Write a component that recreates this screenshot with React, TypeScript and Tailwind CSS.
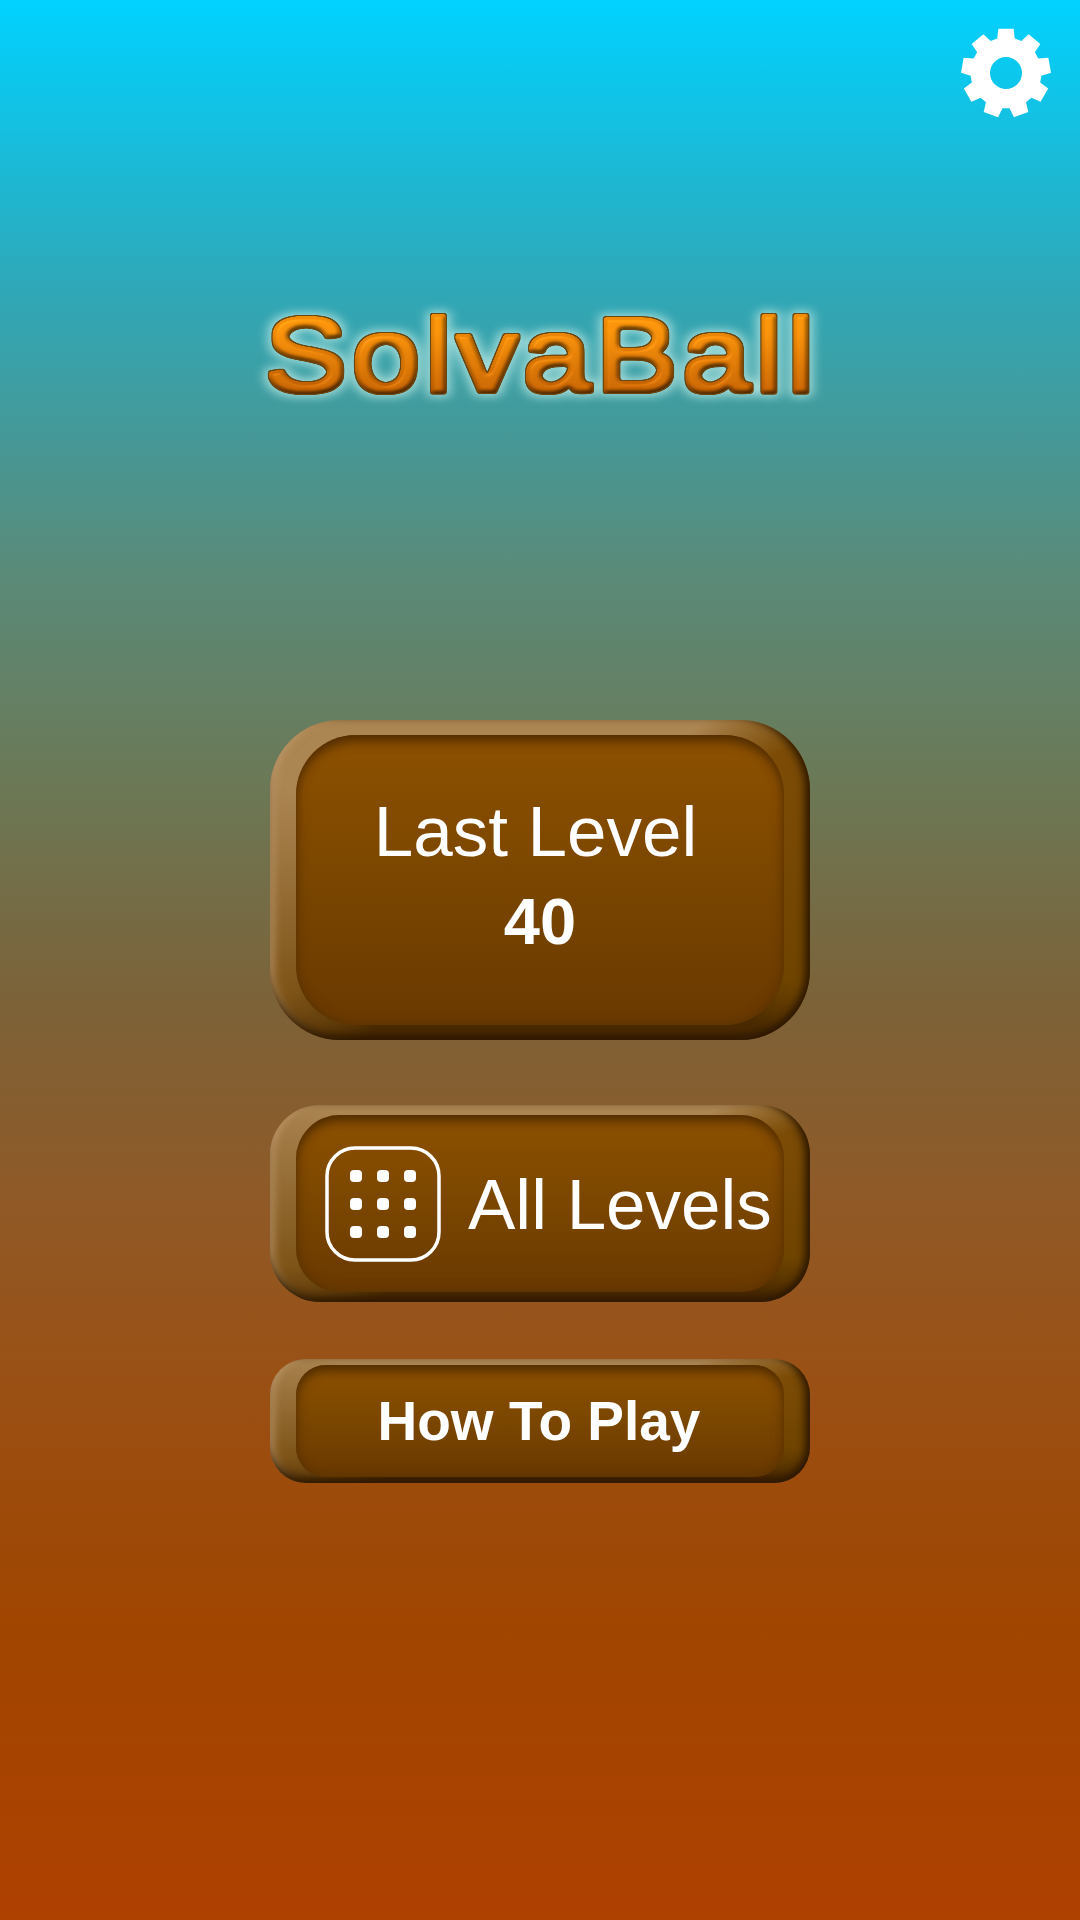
import React from 'react';

// gear outline, built from tooth count so the teeth stay even
const gearPath = (() => {
  const cx = 46, cy = 46, teeth = 9, outer = 45, body = 35.5;
  const step = (Math.PI * 2) / teeth;
  const pts: string[] = [];
  for (let i = 0; i < teeth; i++) {
    const a = -Math.PI / 2 + i * step;
    const at = (r: number, off: number) => {
      const x = cx + r * Math.cos(a + off);
      const y = cy + r * Math.sin(a + off);
      return `${x.toFixed(2)} ${y.toFixed(2)}`;
    };
    pts.push(at(body, -0.25), at(outer, -0.17), at(outer, 0.17), at(body, 0.25));
  }
  return `M${pts.join('L')}Z M${cx - 16} ${cy}a16 16 0 1 0 32 0a16 16 0 1 0 -32 0Z`;
})();

const GearIcon = () => (
  <svg width="92" height="92" viewBox="0 0 92 92" className="text-white">
    <path d={gearPath} fill="currentColor" fillRule="evenodd" />
  </svg>
);

const GridIcon = () => {
  const xs = [31, 58, 85];
  const ys = [30, 58, 86];
  return (
    <svg width="116" height="116" viewBox="0 0 116 116" className="shrink-0">
      <rect x="2" y="2" width="112" height="112" rx="28" fill="none" stroke="#fff" strokeWidth="3.5" />
      {ys.map((y) =>
        xs.map((x) => <rect key={`${x}-${y}`} x={x - 6} y={y - 6} width="12" height="12" rx="4" fill="#fff" />)
      )}
    </svg>
  );
};

interface ChunkyButtonProps {
  outerClass: string;
  innerClass: string;
  children: React.ReactNode;
}

const ChunkyButton = ({ outerClass, innerClass, children }: ChunkyButtonProps) => (
  <button
    className={`flex w-[540px] flex-col shadow-[inset_-9px_0_9px_-4px_#2e1900,inset_0_-9px_9px_-4px_#2e1900,inset_9px_0_10px_-6px_#c09a6c] ${outerClass}`}
  >
    <span
      className={`flex flex-1 mx-[26px] bg-[linear-gradient(180deg,#8a4f00_8%,#7a4600_50%,#6c3b00_92%)] shadow-[inset_0_9px_12px_-4px_#4f2c00,inset_0_0_12px_#653900,inset_0_-6px_10px_-4px_#5a3200] ${innerClass}`}
    >
      {children}
    </span>
  </button>
);

export default function App() {
  return (
    <div
      className="flex min-h-[1920px] w-full flex-col items-center overflow-hidden bg-[linear-gradient(180deg,#00d2ff_0%,#2fa8b8_15%,#5a8a78_30%,#6a7a58_40%,#7c6238_52%,#8f5a28_62%,#9a5014_72%,#a04500_85%,#ae4000_100%)] text-white"
      style={{ fontFamily: '"Liberation Sans", Arial, sans-serif' }}
    >
      {/* hidden filter for the embossed logo */}
      <svg className="absolute h-0 w-0" aria-hidden="true">
        <defs>
          <filter id="logoBevel" x="-10%" y="-30%" width="120%" height="160%" colorInterpolationFilters="sRGB">
            {/* fatten and round the glyphs */}
            <feMorphology in="SourceAlpha" operator="dilate" radius="1.8" result="fat0" />
            <feGaussianBlur in="fat0" stdDeviation="1.4" result="fatBlur" />
            <feComponentTransfer in="fatBlur" result="round">
              <feFuncA type="linear" slope="6" intercept="-2.2" />
            </feComponentTransfer>
            <feMorphology in="SourceGraphic" operator="dilate" radius="5" result="colorFat" />
            <feComposite in="colorFat" in2="round" operator="in" result="body" />
            {/* emboss */}
            <feGaussianBlur in="round" stdDeviation="2.2" result="soft" />
            <feDiffuseLighting in="soft" surfaceScale="3.5" diffuseConstant="1.2" lightingColor="#ffffff" result="dif">
              <feDistantLight azimuth="245" elevation="60" />
            </feDiffuseLighting>
            <feComposite in="body" in2="dif" operator="arithmetic" k1="0.72" k2="0.3" k3="0" k4="0" result="shaded" />
            <feComposite in="shaded" in2="round" operator="in" result="shadedIn" />
            <feSpecularLighting in="soft" surfaceScale="4" specularConstant="0.3" specularExponent="24" lightingColor="#ffc060" result="spec">
              <feDistantLight azimuth="245" elevation="52" />
            </feSpecularLighting>
            <feComposite in="spec" in2="round" operator="in" result="specIn" />
            <feComposite in="shadedIn" in2="specIn" operator="arithmetic" k1="0" k2="1" k3="0.45" k4="0" result="lit" />
            {/* dark rim and pale glow */}
            <feMorphology in="round" operator="dilate" radius="0.5" result="rim" />
            <feFlood floodColor="#6a4610" />
            <feComposite in2="rim" operator="in" result="edge" />
            <feMorphology in="round" operator="dilate" radius="3" result="halo" />
            <feGaussianBlur in="halo" stdDeviation="5" result="glowBlur" />
            <feFlood floodColor="#c8f0ea" floodOpacity="0.75" />
            <feComposite in2="glowBlur" operator="in" result="glow" />
            <feMerge>
              <feMergeNode in="glow" />
              <feMergeNode in="edge" />
              <feMergeNode in="lit" />
            </feMerge>
          </filter>
        </defs>
      </svg>

      <div className="flex w-full justify-end pt-[27px] pr-[28px]">
        <GearIcon />
      </div>

      <h1 className="mt-[161px] scale-x-[1.18] bg-[linear-gradient(180deg,#ec8a08_30%,#b85a00_75%)] bg-clip-text pr-4 pl-[20px] text-[104px] leading-[150px] tracking-[4px] text-transparent [filter:url(#logoBevel)]">
        SolvaBall
      </h1>

      <div className="mt-[290px] flex flex-col gap-[65px]">
        <ChunkyButton
          outerClass="h-[320px] rounded-[70px] bg-[conic-gradient(#ab8552_0deg,#ab8552_46deg,#7c4c06_62deg,#6f4400_112deg,#4a2a00_124deg,#4a2a00_228deg,#7e5418_246deg,#ab8552_290deg,#ab8552_360deg)]"
          innerClass="my-[15px] rounded-[60px] flex-col items-center pt-[57px] pr-[9px]"
        >
          <span className="text-[71px] leading-[80px]">Last Level</span>
          <span className="mt-[10px] pl-[9px] text-[65px] leading-[80px] font-bold">40</span>
        </ChunkyButton>
        <ChunkyButton
          outerClass="h-[197px] rounded-[50px] bg-[conic-gradient(#ab8552_0deg,#ab8552_62deg,#7c4c06_74deg,#6f4400_102deg,#4a2a00_112deg,#4a2a00_240deg,#7e5418_256deg,#ab8552_294deg,#ab8552_360deg)]"
          innerClass="my-[10px] rounded-[44px] items-center pl-[29px] gap-[27px]"
        >
          <GridIcon />
          <span className="pt-[3px] text-[71px] leading-[80px]">All Levels</span>
        </ChunkyButton>
      </div>
      <div className="mt-[57px]">
        <ChunkyButton
          outerClass="h-[124px] rounded-[36px] bg-[conic-gradient(#ab8552_0deg,#ab8552_70deg,#7c4c06_80deg,#6f4400_96deg,#4a2a00_104deg,#4a2a00_250deg,#7e5418_262deg,#ab8552_286deg,#ab8552_360deg)]"
          innerClass="my-[6px] rounded-[30px] items-center justify-center"
        >
          <span className="pr-[2px] text-[55px] leading-[60px] font-bold">How To Play</span>
        </ChunkyButton>
      </div>
    </div>
  );
}
